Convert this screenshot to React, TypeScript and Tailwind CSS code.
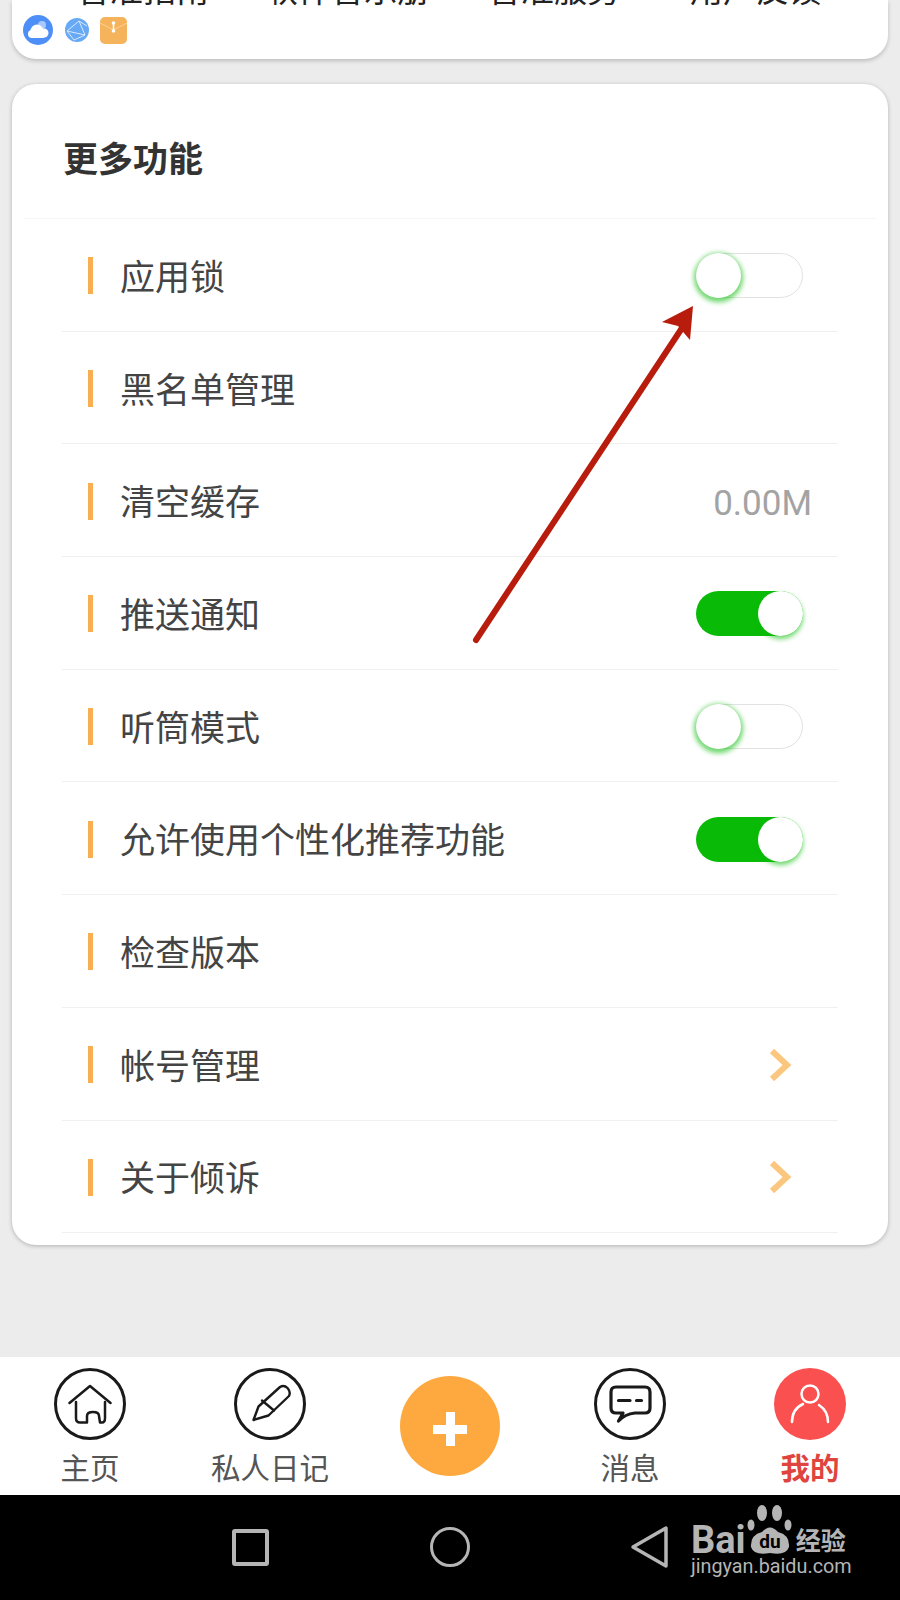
const sans = "font-['Roboto','Noto_Sans_CJK_SC',sans-serif]"

type Row = { label: string; right?: "on" | "off" | "cache" | "chevron" }

const rows: Row[] = [
  { label: "应用锁", right: "off" },
  { label: "黑名单管理" },
  { label: "清空缓存", right: "cache" },
  { label: "推送通知", right: "on" },
  { label: "听筒模式", right: "off" },
  { label: "允许使用个性化推荐功能", right: "on" },
  { label: "检查版本" },
  { label: "帐号管理", right: "chevron" },
  { label: "关于倾诉", right: "chevron" },
]

function Toggle({ on }: { on: boolean }) {
  return (
    <div className={on
      ? "relative mr-[35px] h-[45px] w-[107px] rounded-full bg-[#09bb07]"
      : "relative mr-[35px] h-[45px] w-[107px] rounded-full border border-[#e2e2e2] bg-white"}>
      <div className={on
        ? "absolute right-0 top-0 h-[45px] w-[45px] rounded-full bg-white shadow-[0_3px_5px_rgba(9,187,7,0.6)]"
        : "absolute left-[-1px] top-[-1px] h-[45px] w-[45px] rounded-full bg-white shadow-[0_2px_5px_2px_rgba(9,187,7,0.6)]"} />
    </div>
  )
}

function SettingRow({ row }: { row: Row }) {
  return (
    <div className="mx-[50px] flex h-[112.7px] items-center border-b border-[#f0f0f0] pt-[2px]">
      <div className="ml-[26px] h-[37px] w-[5px] bg-[#f9ae52]" />
      <span className="ml-[27px] flex-1 pt-[5px] text-[35px] leading-none text-[#444444]">{row.label}</span>
      {row.right === "on" && <Toggle on />}
      {row.right === "off" && <Toggle on={false} />}
      {row.right === "cache" && <span className="mr-[26px] pt-[4px] text-[35px] leading-none text-[#a3a3a3]">0.00M</span>}
      {row.right === "chevron" && (
        <svg className="mr-[46px]" width="24" height="34" viewBox="0 0 24 34" fill="none">
          <path d="M4 3 L19 17 L4 31" stroke="#fbc77f" strokeWidth="6" />
        </svg>
      )}
    </div>
  )
}

function NavItem({ label, active, children }: { label: string; active?: boolean; children: React.ReactNode }) {
  return (
    <div className="flex w-[180px] flex-col items-center">
      <div className={active
        ? "flex h-[72px] w-[72px] items-center justify-center rounded-full bg-[#fb5050]"
        : "flex h-[72px] w-[72px] items-center justify-center rounded-full border-[3px] border-[#1a1a1a]"}>
        {children}
      </div>
      <span className={active
        ? "mt-[11px] whitespace-nowrap text-[29.5px] font-bold leading-[36px] text-[#e0443e]"
        : "mt-[11px] whitespace-nowrap text-[29.5px] leading-[36px] text-[#555555]"}>{label}</span>
    </div>
  )
}

export default function App() {
  return (
    <div className={`${sans} flex h-[1600px] w-[900px] flex-col overflow-hidden bg-[#ececec]`}>
      <div className="flex-1 overflow-hidden">
        {/* clipped card at top */}
        <div className="mx-3 h-[59px] overflow-hidden rounded-b-[24px] bg-white shadow-[0_2px_4px_rgba(0,0,0,0.2)]">
          <div className="mt-[-25px] flex h-[30px] items-center whitespace-nowrap pl-[65px] text-[33px] leading-none text-[#222222]">
            <span className="w-[188px]">音准指南</span>
            <span className="w-[223px]">软件音乐册</span>
            <span className="w-[202px]">音准服务</span>
            <span>用户反馈</span>
          </div>
          <div className="mt-[10px] flex items-center pl-[11px]">
            <svg width="30" height="30" viewBox="0 0 30 30" fill="none">
              <circle cx="15" cy="15" r="15" fill="#4e8ef7" />
              <circle cx="19" cy="10" r="4" fill="#a9c8fb" />
              <circle cx="14" cy="16" r="6.5" fill="#fff" />
              <circle cx="21" cy="18" r="4.5" fill="#fff" />
              <circle cx="9" cy="19" r="4" fill="#fff" />
              <rect x="9" y="18" width="12" height="5" fill="#fff" />
            </svg>
            <svg className="ml-[12px]" width="24" height="24" viewBox="0 0 24 24" fill="none">
              <circle cx="12" cy="12" r="12" fill="#67a9f5" />
              <path d="M2 13 L14 3 L20 17 L9 22 Z M2 13 L20 17 M14 3 L22 8" stroke="#d8eafc" strokeWidth="1" />
            </svg>
            <svg className="ml-[11px]" width="27" height="27" viewBox="0 0 27 27" fill="none">
              <rect width="27" height="27" rx="5" fill="#f5b35c" />
              <path d="M0 6 L13.5 13 L27 6" stroke="#fad193" strokeWidth="1" />
              <path d="M13.5 5 V15" stroke="#fff" strokeWidth="1.5" />
              <circle cx="13.5" cy="6" r="1.8" fill="#fff" />
              <circle cx="13.5" cy="14" r="1.8" fill="#fff" />
            </svg>
          </div>
        </div>

        <div className="relative mx-3 mt-[25px] h-[1161px] rounded-[24px] bg-white shadow-[0_1px_4px_rgba(0,0,0,0.25)]">
          <div className="mx-3 flex h-[135px] items-center border-b border-[#f6f6f6] pl-[39px] pt-[18px] text-[35px] font-bold leading-none text-[#333333]">
            更多功能
          </div>
          {rows.map((row) => (
            <SettingRow key={row.label} row={row} />
          ))}
        </div>
      </div>

      {/* tab bar */}
      <div className="relative flex h-[138px] justify-between bg-white px-0 pt-[11px]">
        <div className="flex">
          <NavItem label="主页">
            <svg width="44" height="44" viewBox="0 0 44 44" fill="none" stroke="#1a1a1a" strokeWidth="2.5" strokeLinecap="round" strokeLinejoin="round">
              <path d="M1.5 21 L22 4 L42.5 21" />
              <path d="M8 20 V36 Q8 40.5 12 40.5 H19 V34 Q19 30 25 30 Q31 30 31 34 L32 40.5 H34 Q37 40.5 37 36 V20" />
            </svg>
          </NavItem>
          <NavItem label="私人日记">
            <svg width="44" height="44" viewBox="0 0 44 44" fill="none" stroke="#1a1a1a" strokeWidth="2.4" strokeLinejoin="round" strokeLinecap="round">
              <path d="M5.5 38 L10.5 24.5 L32 5 Q36 2.5 39.5 6 Q43 10 41 14 L20.5 33.5 Z" />
              <path d="M14 18.5 L26 28.5" />
            </svg>
          </NavItem>
        </div>
        <div className="absolute left-[400px] top-[19px] flex h-[100px] w-[100px] items-center justify-center rounded-full bg-[#fda93f] pt-[6px]">
          <div className="relative h-[34px] w-[34px]">
            <div className="absolute left-0 top-[12.5px] h-[9px] w-[34px] bg-white" />
            <div className="absolute left-[12.5px] top-0 h-[34px] w-[9px] bg-white" />
          </div>
        </div>
        <div className="flex">
          <NavItem label="消息">
            <svg width="44" height="44" viewBox="0 0 44 44" fill="none" stroke="#1a1a1a" strokeWidth="3.2" strokeLinejoin="round" strokeLinecap="round">
              <path d="M8 5 H37 Q42 5 42 10 V26 Q42 31 37 31 H27 Q17 32 10.5 39 Q13 35 15 31 H8 Q3 31 3 26 V10 Q3 5 8 5 Z" />
              <path d="M10.5 18.5 H22 M28.5 18.5 H33.5" />
            </svg>
          </NavItem>
          <NavItem label="我的" active>
            <svg width="44" height="44" viewBox="0 0 44 44" fill="none" stroke="#fff" strokeWidth="2.5" strokeLinecap="round">
              <circle cx="22" cy="12" r="8.5" />
              <path d="M4 40 Q4 27 15 22 M40 40 Q40 29 31 23" />
            </svg>
          </NavItem>
        </div>
      </div>

      {/* system nav bar */}
      <div className="relative flex h-[105px] items-center bg-black">
        <div className="absolute left-[232px] top-[34px] h-[37px] w-[37px] rounded-[3px] border-[4px] border-[#b5b5b5]" />
        <div className="absolute left-[430px] top-[32px] h-[40px] w-[40px] rounded-full border-[3.5px] border-[#b5b5b5]" />
        <svg className="absolute left-[630px] top-[30px]" width="40" height="44" viewBox="0 0 40 44" fill="none">
          <path d="M36 3 V41 L3 22 Z" stroke="#b5b5b5" strokeWidth="3.5" strokeLinejoin="round" />
        </svg>
        <div className="absolute left-[691px] top-[10px] text-[#b5b5b5]">
          <div className="flex h-[50px] items-end">
            <span className="text-[38px] font-bold leading-[30px]">Bai</span>
            <svg width="48" height="50" viewBox="0 0 48 50">
              <ellipse cx="16" cy="8" rx="5" ry="8" fill="#b5b5b5" />
              <ellipse cx="31" cy="8" rx="5" ry="8" fill="#b5b5b5" />
              <ellipse cx="5" cy="20" rx="3.5" ry="5.5" fill="#b5b5b5" />
              <ellipse cx="42" cy="20" rx="3.5" ry="5.5" fill="#b5b5b5" />
              <path d="M5 42 Q4 30 16 27 Q24 18 32 27 Q44 30 43 42 Q40 51 24 48 Q8 51 5 42 Z" fill="#b5b5b5" />
              <text x="24" y="43" textAnchor="middle" fontSize="19" fontWeight="700" fill="#000">du</text>
            </svg>
            <span className="ml-[2px] text-[25px] font-bold leading-[26px]">经验</span>
          </div>
          <div className="text-[19.8px] leading-[24px]">jingyan.baidu.com</div>
        </div>
      </div>

      {/* red annotation arrow */}
      <svg className="absolute left-0 top-0" width="900" height="1600" fill="none">
        <path d="M476 640 L682 328" stroke="#b71c0c" strokeWidth="6" strokeLinecap="round" />
        <path d="M693 306 L662 322 L678 326 L690 340 Z" fill="#b71c0c" />
      </svg>
    </div>
  )
}
